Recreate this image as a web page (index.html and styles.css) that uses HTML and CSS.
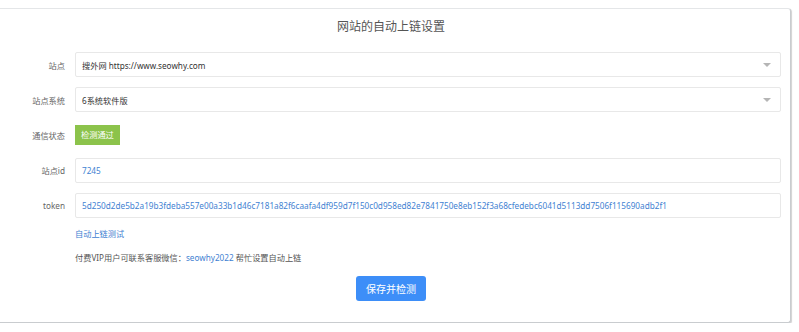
FILE: index.html
```html
<!DOCTYPE html>
<html lang="zh-CN">
<head>
<meta charset="utf-8">
<title>网站的自动上链设置</title>
<link rel="stylesheet" href="styles.css">
</head>
<body>
<div class="panel">
  <h1 class="title">网站的自动上链设置</h1>
  <div class="form">
    <label class="label">站点</label>
    <div class="field select"><span>搜外网 https://www.seowhy.com</span><i class="caret"></i></div>

    <label class="label">站点系统</label>
    <div class="field select"><span>6系统软件版</span><i class="caret"></i></div>

    <label class="label">通信状态</label>
    <div class="status"><span class="ok-btn">检测通过</span></div>

    <label class="label">站点id</label>
    <div class="field blue">7245</div>

    <label class="label">token</label>
    <div class="field blue">5d250d2de5b2a19b3fdeba557e00a33b1d46c7181a82f6caafa4df959d7f150c0d958ed82e7841750e8eb152f3a68cfedebc6041d5113dd7506f115690adb2f1</div>

    <span></span>
    <a class="link" href="#">自动上链测试</a>

    <span></span>
    <p class="note">付费VIP用户可联系客服微信：<span class="wx">seowhy2022</span> 帮忙设置自动上链</p>
  </div>
  <div class="actions"><button class="save">保存并检测</button></div>
</div>
</body>
</html>
```

FILE: styles.css
```css
* { box-sizing: border-box; }
html, body { margin: 0; padding: 0; background: #fff; }
body {
  font-family: "Noto Sans", "Noto Sans CJK SC", sans-serif;
  font-size: 8.2px;
  color: #444;
  overflow: hidden;
}
.panel {
  margin: 8px 0 0 -8px;
  width: 799px;
  height: 315px;
  background: #fff;
  border: 1px solid #e4e6e8;
  border-right-color: #c9cccf;
  border-bottom-color: #c9cccf;
  border-radius: 0 3px 3px 0;
  box-shadow: 1px 1px 1px rgba(0,0,0,0.18);
  padding: 8px 9px 0 0;
}
.title {
  margin: 0;
  font-weight: normal;
  font-size: 12px;
  line-height: 20px;
  text-align: center;
  color: #555;
  padding-left: 8px;
}
.form {
  margin-top: 15px;
  display: grid;
  grid-template-columns: 72px 1fr;
  column-gap: 10px;
  row-gap: 10.3px;
  align-items: center;
}
.label {
  text-align: right;
  color: #666;
}
.field {
  height: 25px;
  border: 1px solid #e8e8e8;
  border-radius: 2px;
  padding: 0 6px;
  display: flex;
  align-items: center;
  color: #333;
  white-space: nowrap;
  overflow: hidden;
}
.select { justify-content: space-between; }
.caret {
  width: 0; height: 0;
  border-left: 4px solid transparent;
  border-right: 4px solid transparent;
  border-top: 4px solid #b5b5b5;
  margin-right: 3px;
}
.blue { color: #3f82d2; }
.status { height: 25px; display: flex; align-items: center; }
.ok-btn {
  display: inline-block;
  height: 20px;
  line-height: 20px;
  padding: 0 6px;
  background: #8cc34b;
  color: #fff;
}
.link {
  color: #3f82d2;
  text-decoration: none;
  line-height: 16px;
  margin-top: -2.6px;
}
.note {
  margin: -2.3px 0 0 0;
  line-height: 16px;
  color: #555;
}
.wx { color: #3f82d2; }
.actions {
  display: flex;
  justify-content: center;
  margin-top: 10px;
  padding-left: 8px;
}
.save {
  width: 70px;
  height: 25px;
  border: 0;
  border-radius: 3px;
  background: #3d8ef8;
  color: #fff;
  font-family: "Noto Sans CJK SC", sans-serif;
  font-size: 10px;
  padding: 0;
}
```
